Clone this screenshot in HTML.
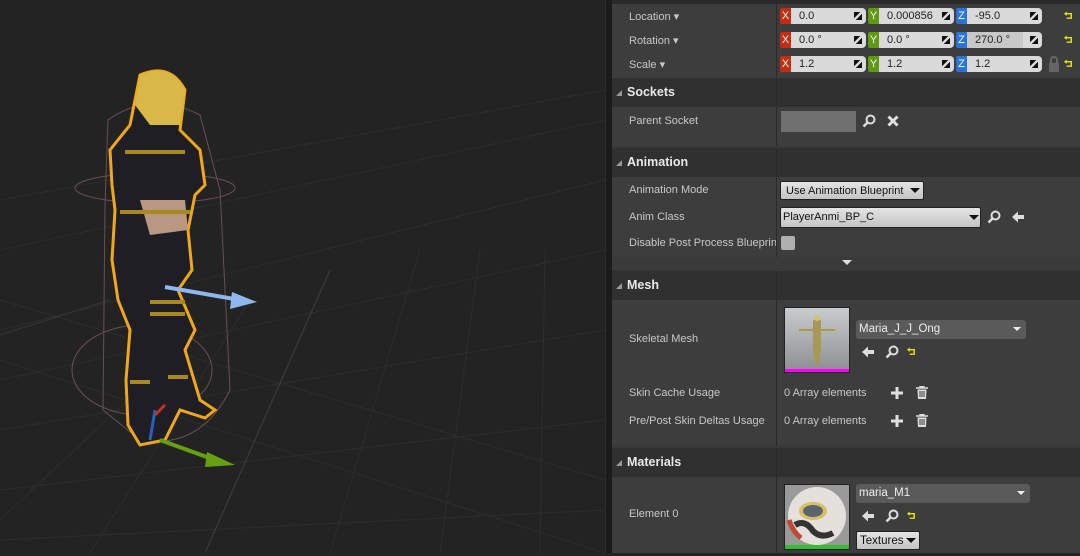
<!DOCTYPE html>
<html><head><meta charset="utf-8"><style>
*{margin:0;padding:0;box-sizing:border-box}
body{width:1080px;height:553px;overflow:hidden;background:#232323;font-family:"Liberation Sans",sans-serif;font-size:11px;color:#c8c8c8;position:relative}
.vp{position:absolute;left:0;top:0;width:605px;height:553px;background:#232323}
.split{position:absolute;left:605px;top:0;width:7px;height:553px;background:#1b1b1b;border-left:1px solid #2c2c2c}
.panel{position:absolute;left:612px;top:0;width:468px;height:553px;background:#383838}
.a{position:absolute}
.row{position:absolute;left:612px;width:468px;background:#3d3d3d}
.hdr{position:absolute;left:612px;width:468px;background:#303030;color:#e8e8e8;font-weight:bold;font-size:12.5px}
.hdr span{position:absolute;left:15px;top:7px}
.hdr:before{content:"";position:absolute;left:4px;top:12px;border-left:6px solid transparent;border-bottom:6px solid #999}
.lbl{position:absolute;left:629px;color:#c8c8c8}
.vline{position:absolute;left:776px;width:1px;background:#2a2a2a}
.ax{position:absolute;width:11px;height:16px;color:#fff;font-size:11px;text-align:center;line-height:16px;border-radius:2px 0 0 2px}
.inp{position:absolute;width:75px;height:16px;background:#dadada;color:#222;line-height:16px;padding-left:8px;border-radius:0 4px 4px 0}
.inp:after{content:"";position:absolute;right:4px;top:4px;width:8px;height:8px;background:linear-gradient(135deg,#111 40%,transparent 40%,transparent 60%,#111 60%)}
.combo{position:absolute;background:linear-gradient(#e4e4e4,#c4c4c4);color:#111;border:1px solid #222;border-radius:2px;padding-left:5px;line-height:18px}
.dd{position:absolute;background:#5a5a5a;color:#eee;border-radius:3px;padding-left:3px;font-size:11.5px;line-height:18px}
.tri{position:absolute;border-left:5px solid transparent;border-right:5px solid transparent;border-top:5px solid #111}
svg.i{position:absolute}
</style></head><body>
<svg width="0" height="0" style="position:absolute">
<defs>
<symbol id="srch" viewBox="0 0 14 14"><circle cx="8.5" cy="5.5" r="4" fill="none" stroke="#ddd" stroke-width="2"/><path d="M5.5 8.5 L1.5 12.5" stroke="#ddd" stroke-width="2.5"/></symbol>
<symbol id="back" viewBox="0 0 14 14"><path d="M1 7 L7 1.5 V5 H13 V9 H7 V12.5 Z" fill="#ddd"/></symbol>
<symbol id="rst" viewBox="0 0 10 10"><path d="M2 3 H8 V8 H3" fill="none" stroke="#e8e800" stroke-width="1.6"/><path d="M0 3 L3 0.5 V5.5 Z" fill="#e8e800"/></symbol>
<symbol id="plus" viewBox="0 0 12 12"><path d="M6 0 V12 M0 6 H12" stroke="#e0e0e0" stroke-width="3"/></symbol>
<symbol id="trash" viewBox="0 0 12 13"><path d="M0 2 H12 M4 2 V0.5 H8 V2" stroke="#ddd" stroke-width="1.4" fill="none"/><path d="M1.5 3.5 H10.5 L10 13 H2 Z" fill="#ddd"/><path d="M4 5 V11 M6 5 V11 M8 5 V11" stroke="#3d3d3d" stroke-width="1"/></symbol>
</defs></svg>
<div class="vp">
<svg width="605" height="553" viewBox="0 0 605 553">
<g stroke="#2d2d2d" stroke-width="1" fill="none">
<path d="M0 330 L605 180"/><path d="M0 380 L605 250"/><path d="M0 430 L605 330"/><path d="M0 490 L605 420"/><path d="M0 540 L605 510"/>
<path d="M0 250 L605 120"/><path d="M0 200 L605 90"/>
<path d="M330 553 L420 250"/><path d="M440 553 L480 250"/><path d="M540 553 L545 250"/>
<path d="M90 553 L250 300"/><path d="M0 520 L160 370"/>
<path d="M0 300 L605 480"/><path d="M0 360 L605 553"/>
</g>
<path d="M205 553 L330 270" stroke="#3a3a3a" stroke-width="1.2"/>
<path d="M0 335 L110 300" stroke="#2f3a2f" stroke-width="1"/>
<g stroke="#6a4e52" fill="none" stroke-width="1">
<ellipse cx="155" cy="188" rx="80" ry="15"/>
<ellipse cx="142" cy="370" rx="70" ry="45"/>
<path d="M105 205 L108 120 Q150 90 200 115 L220 190 L230 390 Q200 450 140 440 L103 410 Z"/>
</g>
<g stroke="#f0a818" stroke-width="3" fill="#1e1e24">
<path d="M140 75 Q170 62 185 90 L180 130 L200 150 L205 185 L195 195 L188 230 L192 270 L178 290 L195 330 L185 350 L200 400 L215 410 L205 418 L180 410 L165 440 L140 445 L128 425 L126 380 L130 330 L118 300 L112 260 L115 210 L112 185 L110 150 L130 125 Z"/>
</g>
<path d="M140 75 Q170 62 185 90 L180 125 L150 125 L135 105 Z" fill="#d8b848"/>
<path d="M140 200 L185 200 L188 230 L150 235 Z" fill="#b89880"/>
<g fill="#a88820"><rect x="125" y="150" width="60" height="4"/><rect x="150" y="300" width="35" height="4"/><rect x="150" y="312" width="35" height="4"/><rect x="130" y="380" width="20" height="4"/><rect x="168" y="375" width="20" height="4"/><rect x="120" y="210" width="70" height="4"/></g>
<path d="M165 287 L240 300" stroke="#8cb8ee" stroke-width="4"/><path d="M232 292 L257 302 L230 309 Z" fill="#8cb8ee"/>
<path d="M160 440 L215 460" stroke="#66a010" stroke-width="4"/><path d="M207 452 L235 465 L205 467 Z" fill="#66a010"/>
<path d="M155 410 L150 440" stroke="#2a5fc0" stroke-width="3"/><path d="M155 415 L165 405" stroke="#c83020" stroke-width="3"/>
</svg>
</div>
<div class="split"></div>
<div class="panel"></div>
<div class="a" style="left:612px;top:0;width:468px;height:4px;background:#2a2a2a"></div>
<div class="row" style="top:4px;height:74px"></div>
<div class="vline" style="top:4px;height:74px"></div>
<div class="lbl" style="top:10px">Location ▾</div>
<div class="lbl" style="top:34px">Rotation ▾</div>
<div class="lbl" style="top:58px">Scale ▾</div>

<div class="ax" style="left:780px;top:8px;background:#c42c10">X</div><div class="inp" style="left:791px;top:8px">0.0</div>
<div class="ax" style="left:868px;top:8px;background:#5c9a10">Y</div><div class="inp" style="left:879px;top:8px">0.000856</div>
<div class="ax" style="left:956px;top:8px;background:#2a74d8">Z</div><div class="inp" style="left:967px;top:8px">-95.0</div>
<div class="ax" style="left:780px;top:32px;background:#c42c10">X</div><div class="inp" style="left:791px;top:32px">0.0 °</div>
<div class="ax" style="left:868px;top:32px;background:#5c9a10">Y</div><div class="inp" style="left:879px;top:32px">0.0 °</div>
<div class="ax" style="left:956px;top:32px;background:#2a74d8">Z</div><div class="inp" style="left:967px;top:32px;background:linear-gradient(90deg,#c8c8c8 75%,#dadada 75%)">270.0 °</div>
<div class="ax" style="left:780px;top:56px;background:#c42c10">X</div><div class="inp" style="left:791px;top:56px">1.2</div>
<div class="ax" style="left:868px;top:56px;background:#5c9a10">Y</div><div class="inp" style="left:879px;top:56px">1.2</div>
<div class="ax" style="left:956px;top:56px;background:#2a74d8">Z</div><div class="inp" style="left:967px;top:56px">1.2</div>
<svg class="i" style="left:1064px;top:11px" width="9" height="9"><use href="#rst"/></svg>
<svg class="i" style="left:1064px;top:35px" width="9" height="9"><use href="#rst"/></svg>
<svg class="i" style="left:1064px;top:59px" width="9" height="9"><use href="#rst"/></svg>
<div class="a" style="left:1049px;top:63px;width:10px;height:9px;background:#666;border-radius:1px"></div><div class="a" style="left:1050px;top:56px;width:8px;height:9px;border:2px solid #666;border-bottom:none;border-radius:4px 4px 0 0"></div>

<div class="hdr" style="top:78px;height:29px"><span>Sockets</span></div>
<div class="vline" style="top:78px;height:68px"></div>
<div class="row" style="top:107px;height:39px"></div>
<div class="vline" style="top:107px;height:39px"></div>
<div class="lbl" style="top:115px">Parent Socket</div>
<div class="a" style="left:781px;top:111px;width:75px;height:21px;background:#707070"></div>
<svg class="i" style="left:862px;top:114px" width="14" height="14"><use href="#srch"/></svg>
<svg class="i" style="left:887px;top:115px" width="12" height="12"><path d="M1.5 1.5 L10.5 10.5 M10.5 1.5 L1.5 10.5" stroke="#e0e0e0" stroke-width="3"/></svg>

<div class="hdr" style="top:148px;height:29px"><span>Animation</span></div>
<div class="vline" style="top:148px;height:29px"></div>
<div class="row" style="top:177px;height:80px"></div>
<div class="vline" style="top:177px;height:80px"></div>
<div class="lbl" style="top:184px">Animation Mode</div>
<div class="combo" style="left:780px;top:181px;width:144px;height:19px">Use Animation Blueprint</div><div class="tri" style="left:910px;top:188px"></div>
<div class="lbl" style="top:211px">Anim Class</div>
<div class="combo" style="left:780px;top:207px;width:201px;height:21px;line-height:19px;padding-left:2px">PlayerAnmi_BP_C</div><div class="tri" style="left:969px;top:215px"></div>
<svg class="i" style="left:987px;top:210px" width="14" height="14"><use href="#srch"/></svg>
<svg class="i" style="left:1011px;top:210px" width="14" height="14"><use href="#back"/></svg>
<div class="lbl" style="top:237px;width:147px;overflow:hidden;white-space:nowrap">Disable Post Process Blueprint</div>
<div class="a" style="left:781px;top:236px;width:14px;height:14px;background:#b0b0b0;border-radius:2px"></div>
<div class="a" style="left:612px;top:257px;width:468px;height:14px;background:#3a3a3a"></div>
<div class="a" style="left:842px;top:260px;border-left:5px solid transparent;border-right:5px solid transparent;border-top:5px solid #ddd"></div>

<div class="hdr" style="top:271px;height:29px"><span>Mesh</span></div>
<div class="vline" style="top:271px;height:29px"></div>
<div class="row" style="top:300px;height:146px"></div>
<div class="vline" style="top:300px;height:146px"></div>
<div class="lbl" style="top:333px">Skeletal Mesh</div>
<div class="a" style="left:784px;top:307px;width:66px;height:66px;background:#222"></div>
<div class="a" style="left:785px;top:308px;width:64px;height:61px;background:linear-gradient(#c8cccc,#8e9292)"><svg width="64" height="61"><path d="M14 22 L50 22" stroke="#b09850" stroke-width="2"/><path d="M28 12 h8 v30 l-2 14 h-4 l-2 -14z" fill="#a89858"/><circle cx="32" cy="10" r="3" fill="#d8c070"/></svg></div>
<div class="a" style="left:785px;top:369px;width:64px;height:3px;background:#f0f"></div>
<div class="dd" style="left:856px;top:320px;width:170px;height:19px">Maria_J_J_Ong</div><div class="a" style="left:1013px;top:327px;border-left:4px solid transparent;border-right:4px solid transparent;border-top:4px solid #eee"></div>
<svg class="i" style="left:861px;top:345px" width="14" height="14"><use href="#back"/></svg>
<svg class="i" style="left:885px;top:345px" width="14" height="14"><use href="#srch"/></svg>
<svg class="i" style="left:907px;top:347px" width="9" height="9"><use href="#rst"/></svg>
<div class="lbl" style="top:387px">Skin Cache Usage</div>
<div class="a" style="left:784px;top:387px">0 Array elements</div>
<svg class="i" style="left:891px;top:387px" width="12" height="12"><use href="#plus"/></svg>
<svg class="i" style="left:916px;top:386px" width="12" height="13"><use href="#trash"/></svg>
<div class="lbl" style="top:415px">Pre/Post Skin Deltas Usage</div>
<div class="a" style="left:784px;top:415px">0 Array elements</div>
<svg class="i" style="left:891px;top:415px" width="12" height="12"><use href="#plus"/></svg>
<svg class="i" style="left:916px;top:414px" width="12" height="13"><use href="#trash"/></svg>

<div class="hdr" style="top:448px;height:29px"><span>Materials</span></div>
<div class="vline" style="top:448px;height:29px"></div>
<div class="row" style="top:477px;height:76px"></div>
<div class="vline" style="top:477px;height:76px"></div>
<div class="lbl" style="top:508px">Element 0</div>
<div class="a" style="left:784px;top:484px;width:66px;height:66px;background:#222"></div>
<div class="a" style="left:785px;top:485px;width:64px;height:60px;background:#9a9a9a"><svg width="64" height="60"><circle cx="32" cy="31" r="29" fill="#e4e0dc"/><ellipse cx="28" cy="26" rx="14" ry="9" fill="#d8c060"/><ellipse cx="28" cy="26" rx="10" ry="6" fill="#5a6470"/><path d="M10 40 q10 -6 18 6 q8 8 20 2" stroke="#333" stroke-width="6" fill="none"/><path d="M4 35 q4 12 12 18" stroke="#c04a30" stroke-width="5" fill="none"/></svg></div>
<div class="a" style="left:785px;top:545px;width:64px;height:4px;background:#2fbf2f"></div>
<div class="dd" style="left:856px;top:484px;width:174px;height:19px">maria_M1</div><div class="a" style="left:1017px;top:491px;border-left:4px solid transparent;border-right:4px solid transparent;border-top:4px solid #eee"></div>
<svg class="i" style="left:861px;top:509px" width="14" height="14"><use href="#back"/></svg>
<svg class="i" style="left:885px;top:509px" width="14" height="14"><use href="#srch"/></svg>
<svg class="i" style="left:907px;top:511px" width="9" height="9"><use href="#rst"/></svg>
<div class="combo" style="left:856px;top:531px;width:64px;height:19px;font-size:11.5px;padding-left:3px">Textures</div><div class="tri" style="left:906px;top:538px"></div>
</body></html>
